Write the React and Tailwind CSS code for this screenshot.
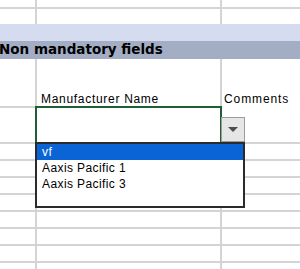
export default function App() {
  const font = { fontFamily: '"Liberation Sans", Arial, sans-serif' };
  return (
    <div className="relative w-[300px] h-[269px] overflow-hidden bg-white" style={font}>
      {/* row 1 */}
      <div className="flex h-[9px]">
        <div className="w-[37px] border-r-2 border-b-2 border-[#d4d4d4]" />
        <div className="w-[185px] border-r-2 border-b-2 border-[#d4d4d4]" />
        <div className="flex-1 border-b-2 border-[#d4d4d4]" />
      </div>
      {/* row 2 */}
      <div className="flex h-[15px]">
        <div className="w-[37px] border-r-2 border-[#d4d4d4]" />
        <div className="w-[185px] border-r-2 border-[#d4d4d4]" />
        <div className="flex-1" />
      </div>
      {/* band 1 */}
      <div className="h-[17px] bg-[#d6dcf0]" />
      {/* band 2 */}
      <div className="h-[18px] bg-[#a3aec5] flex items-center overflow-hidden">
        <span
          className="-ml-px whitespace-nowrap text-[13.5px] font-bold text-black leading-none"
          style={{ fontFamily: '"DejaVu Sans", Verdana, sans-serif' }}
        >
          Non mandatory fields
        </span>
      </div>
      {/* row 5: labels */}
      <div className="flex h-[49px]">
        <div className="w-[37px] border-r-2 border-b-2 border-[#d4d4d4]" />
        <div className="w-[185px] border-r-2 border-[#d4d4d4] flex items-end pl-[4px] pb-[2px]">
          <span className="text-[12px] tracking-[0.7px] leading-[14px] text-black whitespace-nowrap">
            Manufacturer Name
          </span>
        </div>
        <div className="flex-1 flex items-end pl-[2px] pb-[2px]">
          <span className="text-[12px] tracking-[0.9px] leading-[14px] text-black whitespace-nowrap">
            Comments
          </span>
        </div>
      </div>
      {/* row 6: active cell */}
      <div className="flex h-[36px]">
        <div className="w-[37px] border-r-2 border-b-2 border-[#d4d4d4]" />
        <div className="w-[185px] border-r-2 border-b-2 border-[#d4d4d4]" />
        <div className="flex-1 border-b-2 border-[#d4d4d4]" />
      </div>
      {/* regular rows */}
      {Array.from({ length: 8 }).map((_, i) => (
        <div key={i} className="flex h-[17px]">
          <div className="w-[37px] border-r-2 border-b-2 border-[#d4d4d4]" />
          <div className="w-[185px] border-r-2 border-b-2 border-[#d4d4d4]" />
          <div className="flex-1 border-b-2 border-[#d4d4d4]" />
        </div>
      ))}

      {/* active cell selection */}
      <div className="absolute left-[35px] top-[106px] w-[187px] h-[38px] border-2 border-[#1f5f36]" />

      {/* dropdown arrow button */}
      <div className="absolute left-[221px] top-[117px] w-[24px] h-[25px] bg-[#e6e6e6] border border-[#9c9c9c] flex items-center justify-center">
        <svg width="10" height="5" viewBox="0 0 10 5">
          <path d="M0 0 H10 L5 5 Z" fill="#4d4d4d" />
        </svg>
      </div>

      {/* dropdown list */}
      <div className="absolute left-[35px] top-[142px] w-[210px] h-[66px] border-2 border-[#2b2b2b] bg-white">
        <div className="h-[16px] bg-[#0a64d6] text-white text-[12px] tracking-[0.4px] leading-[16px] pl-[5px]">
          vf
        </div>
        <div className="h-[16px] text-black text-[12px] tracking-[0.4px] leading-[16px] pl-[5px]">
          Aaxis Pacific 1
        </div>
        <div className="h-[16px] text-black text-[12px] tracking-[0.4px] leading-[16px] pl-[5px]">
          Aaxis Pacific 3
        </div>
      </div>
    </div>
  );
}
